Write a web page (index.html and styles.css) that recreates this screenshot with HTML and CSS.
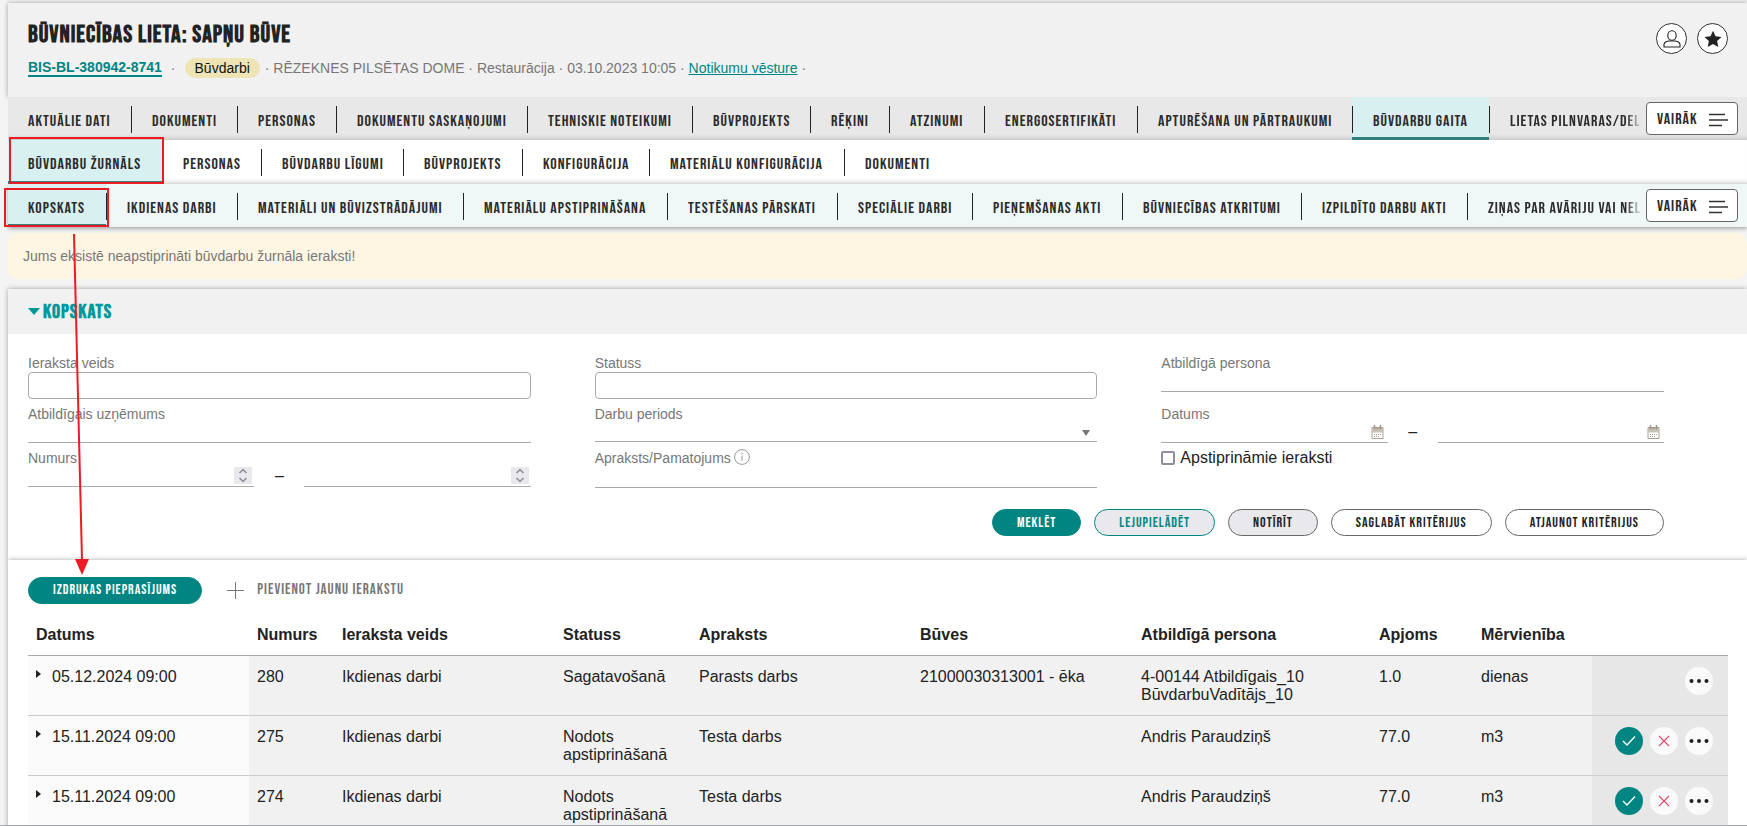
FILE: index.html
```html
<!DOCTYPE html>
<html lang="lv">
<head>
<meta charset="utf-8">
<title>Būvniecības lieta: Sapņu būve</title>
<link rel="stylesheet" href="styles.css">
</head>
<body>
<svg class="sprite" aria-hidden="true">
  <symbol id="i-menu" viewBox="0 0 20 14"><path d="M0 1.500h16M0 7h19M0 12.500h13" fill="none" stroke="#333" stroke-width="1.3"/></symbol>
  <symbol id="i-dots" viewBox="0 0 20 6"><g fill="#222"><circle cx="2.500" cy="3" r="2"/><circle cx="10" cy="3" r="2"/><circle cx="17.500" cy="3" r="2"/></g></symbol>
  <symbol id="i-check" viewBox="0 0 14 12"><path d="M1 6l4 4L13 1.500" fill="none" stroke="#fff" stroke-width="1.3"/></symbol>
  <symbol id="i-cross" viewBox="0 0 12 12"><path d="M1 1l10 10M11 1L1 11" fill="none" stroke="#e0486a" stroke-width="1.1"/></symbol>
  <symbol id="i-cal" viewBox="0 0 13 14"><path d="M1 2.500h11v11H1z" fill="#fff" stroke="#a99f92"/><path d="M1 3h11v4.500H1z" fill="#c9c1b6"/><path d="M3.500 0v4.500M6.500 2v2.500M9.500 0v4.500" stroke="#a0968a" stroke-width="1.500"/><path d="M3 9.500h8M3 11.500h6" stroke="#a99f92" stroke-dasharray="1 1"/></symbol>
  <symbol id="i-spin" viewBox="0 0 18 17"><path d="M0 0h18v17H0z" fill="#e9e9ed"/><path d="M5.500 6L9 2.700 12.500 6M5.500 11L9 14.300 12.500 11" fill="none" stroke="#8f8f9d" stroke-width="1.6"/></symbol>
</svg>
<main class="page">
  <header class="case">
    <div>
      <h1 class="case-title">BŪVNIECĪBAS LIETA: SAPŅU BŪVE</h1>
      <div class="meta">
        <a class="case-id" href="#">BIS-BL-380942-8741</a><span class="dot">·</span><span class="pill">Būvdarbi</span>
        <span class="meta-text">· RĒZEKNES PILSĒTAS DOME · Restaurācija · 03.10.2023 10:05 · <a class="history" href="#">Notikumu vēsture</a> ·</span>
      </div>
    </div>
    <div class="case-icons">
      <button class="round" aria-label="Persona"><svg width="18" height="18" viewBox="0 0 18 18" fill="none" stroke="#222" stroke-width="1.1"><ellipse cx="9" cy="5.500" rx="4.200" ry="4.800"/><path d="M1 17v-2.500c0-2 3-3.500 5-3.500h6c2 0 5 1.500 5 3.500V17z"/></svg></button>
      <button class="round" aria-label="Izlase"><svg width="18" height="18" viewBox="0 0 18 18"><path d="M9 .8l2.500 5.500 6 .7-4.400 4.100 1.200 6L9 14.100l-5.300 3 1.200-6L.5 7l6-.7z" fill="#222"/></svg></button>
    </div>
  </header>

  <nav class="tabs tabs-main">
    <a href="#">AKTUĀLIE DATI</a><a href="#">DOKUMENTI</a><a href="#">PERSONAS</a><a href="#">DOKUMENTU SASKAŅOJUMI</a><a href="#">TEHNISKIE NOTEIKUMI</a><a href="#">BŪVPROJEKTS</a><a href="#">RĒĶINI</a><a href="#">ATZINUMI</a><a href="#">ENERGOSERTIFIKĀTI</a><a href="#">APTURĒŠANA UN PĀRTRAUKUMI</a><a href="#" class="active">BŪVDARBU GAITA</a><a href="#" class="cut">LIETAS PILNVARAS/DEL</a>
    <button class="more">VAIRĀK <svg width="20" height="14"><use href="#i-menu"/></svg></button>
  </nav>
  <nav class="tabs tabs-work">
    <a href="#" class="active">BŪVDARBU ŽURNĀLS</a><a href="#">PERSONAS</a><a href="#">BŪVDARBU LĪGUMI</a><a href="#">BŪVPROJEKTS</a><a href="#">KONFIGURĀCIJA</a><a href="#">MATERIĀLU KONFIGURĀCIJA</a><a href="#">DOKUMENTI</a>
  </nav>
  <nav class="tabs tabs-journal">
    <a href="#" class="active">KOPSKATS</a><a href="#">IKDIENAS DARBI</a><a href="#">MATERIĀLI UN BŪVIZSTRĀDĀJUMI</a><a href="#">MATERIĀLU APSTIPRINĀŠANA</a><a href="#">TESTĒŠANAS PĀRSKATI</a><a href="#">SPECIĀLIE DARBI</a><a href="#">PIEŅEMŠANAS AKTI</a><a href="#">BŪVNIECĪBAS ATKRITUMI</a><a href="#">IZPILDĪTO DARBU AKTI</a><a href="#" class="cut">ZIŅAS PAR AVĀRIJU VAI NEL</a>
    <button class="more">VAIRĀK <svg width="20" height="14"><use href="#i-menu"/></svg></button>
  </nav>

  <p class="notice">Jums eksistē neapstiprināti būvdarbu žurnāla ieraksti!</p>

  <section class="panel">
    <h2 class="panel-head"><svg width="12" height="7" viewBox="0 0 12 7"><path d="M0 0h12L6 7z" fill="#009999"/></svg>KOPSKATS</h2>
    <form class="filter">
      <div class="cols">
        <div class="col">
          <div class="field"><label for="f1">Ieraksta veids</label><input id="f1" class="box"></div>
          <div class="field"><label for="f2">Atbildīgais uzņēmums</label><input id="f2" class="line"></div>
          <div class="field"><label for="f3">Numurs</label>
            <div class="range"><span class="with-icon spin"><input id="f3" class="line"><svg width="18" height="17"><use href="#i-spin"/></svg></span><span class="dash">–</span><span class="with-icon spin"><input aria-label="Numurs līdz" class="line"><svg width="18" height="17"><use href="#i-spin"/></svg></span></div>
          </div>
        </div>
        <div class="col">
          <div class="field"><label for="f4">Statuss</label><input id="f4" class="box"></div>
          <div class="field"><label for="f5">Darbu periods</label><span class="with-icon pick"><select id="f5" class="line"><option></option></select><svg width="8" height="6" viewBox="0 0 8 6"><path d="M0 0h8L4 6z" fill="#777"/></svg></span></div>
          <div class="field"><label for="f6" class="with-info">Apraksts/Pamatojums<svg class="info" width="16" height="16" viewBox="0 0 16 16" fill="none" stroke="#999"><circle cx="8" cy="8" r="7.400"/><path d="M8 6.500V12M8 3.800v1.500"/></svg></label><input id="f6" class="line"></div>
        </div>
        <div class="col">
          <div class="field tall"><label for="f7">Atbildīgā persona</label><input id="f7" class="line"></div>
          <div class="field"><label for="f8">Datums</label>
            <div class="range"><span class="with-icon"><input id="f8" class="line"><svg width="13" height="14"><use href="#i-cal"/></svg></span><span class="dash">–</span><span class="with-icon"><input aria-label="Datums līdz" class="line"><svg width="13" height="14"><use href="#i-cal"/></svg></span></div>
          </div>
          <label class="check"><input type="checkbox">Apstiprināmie ieraksti</label>
        </div>
      </div>
      <div class="actions">
        <button type="button" class="btn primary">MEKLĒT</button>
        <button type="button" class="btn grey teal">LEJUPIELĀDĒT</button>
        <button type="button" class="btn grey">NOTĪRĪT</button>
        <button type="button" class="btn">SAGLABĀT KRITĒRIJUS</button>
        <button type="button" class="btn">ATJAUNOT KRITĒRIJUS</button>
      </div>
    </form>
  </section>

  <section class="panel list">
    <div class="toolbar">
      <button class="btn primary">IZDRUKAS PIEPRASĪJUMS</button>
      <button class="add"><svg width="17" height="17" viewBox="0 0 17 17"><path d="M8.500 0v17M0 8.500h17" stroke="#777"/></svg>PIEVIENOT JAUNU IERAKSTU</button>
    </div>
    <table class="records">
      <colgroup><col class="c-date"><col class="c-num"><col class="c-type"><col class="c-status"><col class="c-desc"><col class="c-build"><col class="c-person"><col class="c-amount"><col class="c-unit"><col class="c-act"></colgroup>
      <thead><tr><th>Datums</th><th>Numurs</th><th>Ieraksta veids</th><th>Statuss</th><th>Apraksts</th><th>Būves</th><th>Atbildīgā persona</th><th>Apjoms</th><th>Mērvienība</th><th></th></tr></thead>
      <tbody>
        <tr><td><button class="expand" aria-label="Izvērst"></button>05.12.2024 09:00</td><td>280</td><td>Ikdienas darbi</td><td>Sagatavošanā</td><td>Parasts darbs</td><td>21000030313001 - ēka</td><td>4-00144 Atbildīgais_10 BūvdarbuVadītājs_10</td><td>1.0</td><td>dienas</td><td><div class="row-acts"><button class="act" aria-label="Vairāk"><svg width="20" height="6"><use href="#i-dots"/></svg></button></div></td></tr>
        <tr><td><button class="expand" aria-label="Izvērst"></button>15.11.2024 09:00</td><td>275</td><td>Ikdienas darbi</td><td>Nodots apstiprināšanā</td><td>Testa darbs</td><td></td><td>Andris Paraudziņš</td><td>77.0</td><td>m3</td><td><div class="row-acts"><button class="act ok" aria-label="Apstiprināt"><svg width="14" height="12"><use href="#i-check"/></svg></button><button class="act" aria-label="Noraidīt"><svg width="12" height="12"><use href="#i-cross"/></svg></button><button class="act" aria-label="Vairāk"><svg width="20" height="6"><use href="#i-dots"/></svg></button></div></td></tr>
        <tr><td><button class="expand" aria-label="Izvērst"></button>15.11.2024 09:00</td><td>274</td><td>Ikdienas darbi</td><td>Nodots apstiprināšanā</td><td>Testa darbs</td><td></td><td>Andris Paraudziņš</td><td>77.0</td><td>m3</td><td><div class="row-acts"><button class="act ok" aria-label="Apstiprināt"><svg width="14" height="12"><use href="#i-check"/></svg></button><button class="act" aria-label="Noraidīt"><svg width="12" height="12"><use href="#i-cross"/></svg></button><button class="act" aria-label="Vairāk"><svg width="20" height="6"><use href="#i-dots"/></svg></button></div></td></tr>
      </tbody>
    </table>
  </section>
</main>
<svg class="marks" width="180" height="600" viewBox="0 0 180 600" aria-hidden="true">
  <g fill="none" stroke="#ed1c24" stroke-width="2"><path d="M10 138h153v45H10zM5 189h103v37H5z"/><path d="M74 234L82 560"/></g>
  <path d="M75 559h14l-7 16z" fill="#ed1c24"/>
</svg>
</body>
</html>
```
FILE: styles.css
```css
* { box-sizing: border-box; }
html { height: 100%; }
body {
  margin: 0;
  height: 100%;
  overflow: hidden;
  position: relative;
  border-bottom: 1px solid #a5a5ad;
  background: #f4f4f4;
  color: #222;
  font: 16px/18px "Liberation Sans", Arial, sans-serif;
}
a { color: inherit; text-decoration: none; }
button, input, select { font: inherit; color: inherit; margin: 0; }
button { background: none; border: 0; padding: 0; }
.sprite { position: absolute; width: 0; height: 0; }
.marks { position: absolute; left: 0; top: 0; pointer-events: none; }
.page { margin-left: 8px; padding-top: 3px; }

.case {
  display: flex;
  justify-content: space-between;
  height: 94px;
  padding: 20px 19px 0 20px;
  background: #f1f1f1;
  box-shadow: 0 0 5px rgba(0, 0, 0, .35);
}
.case-title, .panel-head, .tabs, .more, .btn, .add { font-family: "Bebas Neue", "Roboto Condensed", Roboto, sans-serif; letter-spacing: 1px; }
.case-title { margin: 0; font-size: 24px; line-height: 24px; font-weight: bold; }
.meta { display: flex; align-items: center; margin-top: 11px; height: 20px; font-size: 14px; line-height: 20px; color: #777; white-space: nowrap; }
.case-id { color: #008583; font-weight: bold; line-height: 16px; border-bottom: 2px solid #008583; }
.dot { margin: 0 9px; }
.pill { height: 20px; padding: 0 10px; border-radius: 10px; background: #efe4b4; color: #111; }
.meta-text { margin-left: 5px; }
.history { color: #008583; text-decoration: underline; }
.case-icons { display: flex; gap: 10px; }
.round { width: 31px; height: 31px; display: grid; place-items: center; border: 1px solid #333; border-radius: 50%; background: #fff; }

.tabs {
  position: relative;
  display: grid;
  height: 43px;
  overflow: hidden;
  font-size: 16px;
  color: #2b2b2b;
  box-shadow: inset 0 -6px 6px -6px rgba(0, 0, 0, .25);
}
.tabs a {
  position: relative;
  padding: 16px 0 0 21px;
  line-height: 18px;
  white-space: nowrap;
}
.tabs a:first-child { padding-left: 20px; }
.tabs a + a::before { content: ""; position: absolute; left: 0; top: 9px; height: 27px; border-left: 1px solid #222; }
.tabs .active { background: #d8f0f0; border-bottom: 3px solid #33807f; }
.tabs .cut { margin-right: 105px; -webkit-mask: linear-gradient(to left, transparent, #000 16px); mask: linear-gradient(to left, transparent, #000 16px); }
.tabs-main { background: #e8e8e8; grid-template-columns: 123px 106px 99px 191px 165px 118px 79px 95px 153px 215px 137px 1fr; }
.tabs-work { height: 44px; background: #fff; grid-template-columns: 154px 99px 142px 119px 127px 195px 1fr; }
.tabs-work a:nth-child(2)::before { display: none; }
.tabs-journal { background: #eff7f7; grid-template-columns: 98px 131px 226px 204px 170px 135px 150px 179px 166px 1fr; overflow: visible; box-shadow: 0 2px 4px rgba(0, 0, 0, .3); }
.more {
  position: absolute;
  right: 9px;
  top: 5px;
  width: 92px;
  height: 33px;
  display: flex;
  align-items: center;
  justify-content: space-between;
  padding: 2px 8px 0 10px;
  border: 1px solid #666;
  border-radius: 4px;
  background: #fff;
}

.notice { margin: 6px 0 10px; padding: 14px 15px; border-radius: 10px; background: #fef6e3; color: #777; font-size: 14px; }

.panel { background: #fff; box-shadow: 0 0 5px rgba(0, 0, 0, .35); }
.panel-head { display: flex; align-items: center; gap: 3px; height: 45px; margin: 0; padding-left: 20px; background: #f1f1f1; color: #009999; font-size: 20px; font-weight: bold; }
.filter { padding: 20px 83px 24px 20px; }
.cols { display: grid; grid-template-columns: repeat(3, 1fr); gap: 64px; }
.field { margin-bottom: 6px; }
.field > label { display: block; font-size: 14px; line-height: 18px; color: #777; white-space: nowrap; }
.field > .with-info { line-height: 20px; }
.box { display: block; width: 100%; height: 27px; border: 1px solid #aaa; border-radius: 4px; background: #fff; }
.line { display: block; width: 100%; height: 20px; border: 0; border-bottom: 1px solid #aaa; background: none; border-radius: 0; appearance: none; }
.tall { margin-bottom: 13px; }
.with-icon { position: relative; flex: 1; display: block; }
.with-icon svg { position: absolute; right: 4px; bottom: 4px; }
.with-icon.spin svg { right: 2px; bottom: 3px; }
.with-icon.pick svg { right: 7px; bottom: 6px; }
.pick .line { height: 19px; }
.range { display: flex; }
.dash { width: 50px; text-align: center; }
.info { margin-left: 3px; vertical-align: -2px; }
.check { display: flex; align-items: center; gap: 5px; }
.check input { appearance: none; width: 14px; height: 14px; border: 2px solid #8f8f9d; border-radius: 2px; background: #fff; }
.actions { display: flex; justify-content: flex-end; gap: 13px; margin-top: 15px; }
.btn { height: 27px; padding: 0 24px; border: 1px solid #666; border-radius: 14px; background: #fff; font-size: 14px; white-space: nowrap; }
.grey { background: #e9e9ed; }
.teal { color: #008583; border-color: #008583; }
.primary { background: #008583; border-color: #008583; color: #fff; }

.list { padding: 16px 19px 0 20px; }
.toolbar { display: flex; align-items: center; gap: 25px; height: 28px; }
.add { display: flex; align-items: center; gap: 13px; color: #777; font-size: 15px; }
.records { width: 100%; margin-top: 11px; border-collapse: collapse; table-layout: fixed; }
.records th { height: 40px; padding: 0 8px; text-align: left; border-bottom: 1px solid #aaa; }
.records td { height: 60px; padding: 12px 8px 11px; vertical-align: top; background: #f1f1f1; border-bottom: 1px solid #ccc; }
.records td:first-child { background: #fafafa; }
.records td:last-child { background: #e7e7e7; padding: 11px 15px 0; }
.c-date { width: 13%; } .c-num { width: 5%; } .c-type { width: 13%; } .c-status { width: 8%; } .c-desc { width: 13%; }
.c-build { width: 13%; } .c-person { width: 14%; } .c-amount { width: 6%; } .c-unit { width: 7%; } .c-act { width: 8%; }
.expand { width: 16px; height: 9px; vertical-align: 3px; }
.expand::before { content: ""; display: block; width: 0; border: solid transparent; border-width: 4px 0 4px 5px; border-left-color: #222; }
.row-acts { display: flex; justify-content: flex-end; gap: 7px; }
.act { width: 28px; height: 28px; display: grid; place-items: center; border-radius: 50%; background: #fafafa; }
.ok { background: #008583; }
```
